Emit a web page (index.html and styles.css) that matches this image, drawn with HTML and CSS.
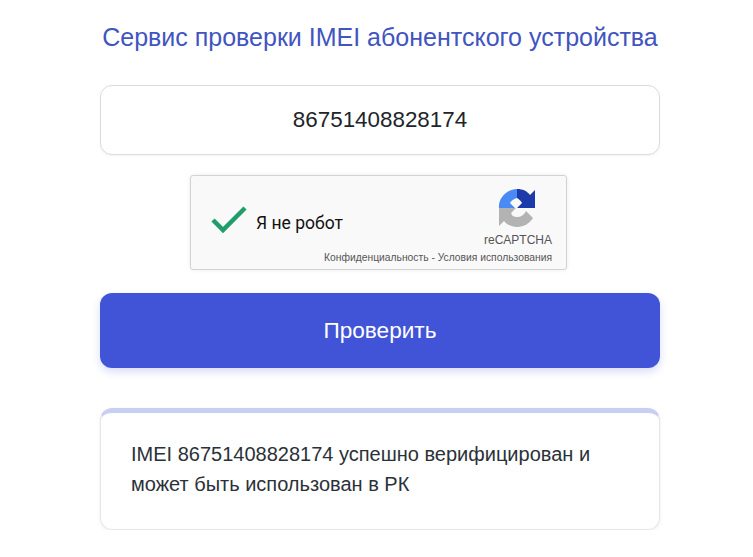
FILE: index.html
```html
<!DOCTYPE html>
<html lang="ru">

<head>
    <meta charset="UTF-8">
    <meta name="viewport" content="width=device-width, initial-scale=1.0">
    <title>Сервис проверки IMEI</title>
    <link rel="stylesheet" href="styles.css">
</head>

<body>
    <div class="container">
        <h1 class="title">Сервис проверки IMEI абонентского устройства</h1>

        <input class="imei-input" type="text" value="86751408828174">

        <!-- Капча -->
        <div class="captcha">
            <svg class="captcha-check" width="38" height="30" viewBox="0 0 38 30">
                <path d="M3 15 L13 25 L35 3" fill="none" stroke="#1f9d6a" stroke-width="4.5"/>
            </svg>
            <span class="captcha-label">Я не робот</span>
            <div class="captcha-brand">
                <svg width="38" height="38" viewBox="0 0 38 38">
                    <path d="M19 0 L19 9 C15 10 13 12 12 14 L17 19 L1 19 C0 9 9 0 19 0 Z" fill="#4a8af4"/>
                    <path d="M19 0 C25 0 29 2 32 6 L37 1 L37 19 L19 19 L24 14 C23 12 21 10 19 9 Z" fill="#1c3aa9"/>
                    <path d="M1 19 L1 37 L6 32 C9 36 14 38 19 38 C26 38 32 34 35 29 L28 22 C26 26 23 28 19 28 C16 28 14 27 13 24 L18 19 Z" fill="#b3b3b3"/>
                </svg>
                <span class="captcha-name">reCAPTCHA</span>
                <span class="captcha-links">Конфиденциальность - Условия использования</span>
            </div>
        </div>

        <button class="submit" type="button">Проверить</button>

        <div class="result">
            IMEI 86751408828174 успешно верифицирован и может быть использован в РК
        </div>
    </div>
</body>

</html>
```

FILE: styles.css
```css
body {
    font-family: 'Liberation Sans', Arial, sans-serif;
    margin: 0;
    padding: 0;
    background: #fff;
    color: #212529;
}

.container {
    width: 560px;
    margin-left: 100px;
    padding-top: 23px;
    display: flex;
    flex-direction: column;
    align-items: center;
}

.title {
    margin: 0 0 33px;
    font-size: 25px;
    line-height: 29px;
    font-weight: 400;
    color: #4154bf;
    white-space: nowrap;
}

.imei-input {
    box-sizing: border-box;
    width: 100%;
    height: 70px;
    padding: 0 12px;
    border: 1px solid #dcdcdc;
    border-radius: 12px;
    font-family: inherit;
    font-size: 22.4px;
    text-align: center;
    color: #212529;
    box-shadow: 0 1px 3px rgba(0, 0, 0, 0.05);
}

.captcha {
    box-sizing: border-box;
    width: 377px;
    height: 95px;
    margin-top: 20px;
    margin-left: -3px;
    padding-left: 19px;
    display: flex;
    align-items: center;
    position: relative;
    background: #f9f9f9;
    border: 1px solid #d3d3d3;
    border-radius: 3px;
    box-shadow: 0 0 4px rgba(0, 0, 0, 0.08);
}

.captcha-check {
    margin-bottom: 6px;
}

.captcha-label {
    margin-left: 8px;
    font-family: 'Roboto', sans-serif;
    font-size: 17.5px;
    color: #111;
}

.captcha-brand {
    position: absolute;
    right: 14px;
    top: 13px;
    display: flex;
    flex-direction: column;
    align-items: flex-end;
}

.captcha-brand svg {
    margin-right: 16px;
}

.captcha-name {
    margin-top: 6px;
    font-size: 12px;
    line-height: 14px;
    color: #555;
}

.captcha-links {
    margin-top: 5px;
    font-size: 10.3px;
    line-height: 12px;
    color: #555;
    white-space: nowrap;
}

.submit {
    width: 100%;
    height: 75px;
    margin-top: 23px;
    border: none;
    border-radius: 12px;
    background: #4154d8;
    color: #fff;
    font-family: inherit;
    font-size: 22.6px;
    box-shadow: 0 4px 8px rgba(65, 84, 216, 0.2);
    cursor: pointer;
}

.result {
    box-sizing: border-box;
    width: 100%;
    margin-top: 40px;
    padding: 26px 30px 30px;
    border: 1px solid #e6e6e6;
    border-top: 5px solid #c9cef3;
    border-radius: 12px;
    font-size: 20px;
    line-height: 30px;
    color: #2b3138;
    box-shadow: 0 1px 4px rgba(0, 0, 0, 0.06);
}
```
